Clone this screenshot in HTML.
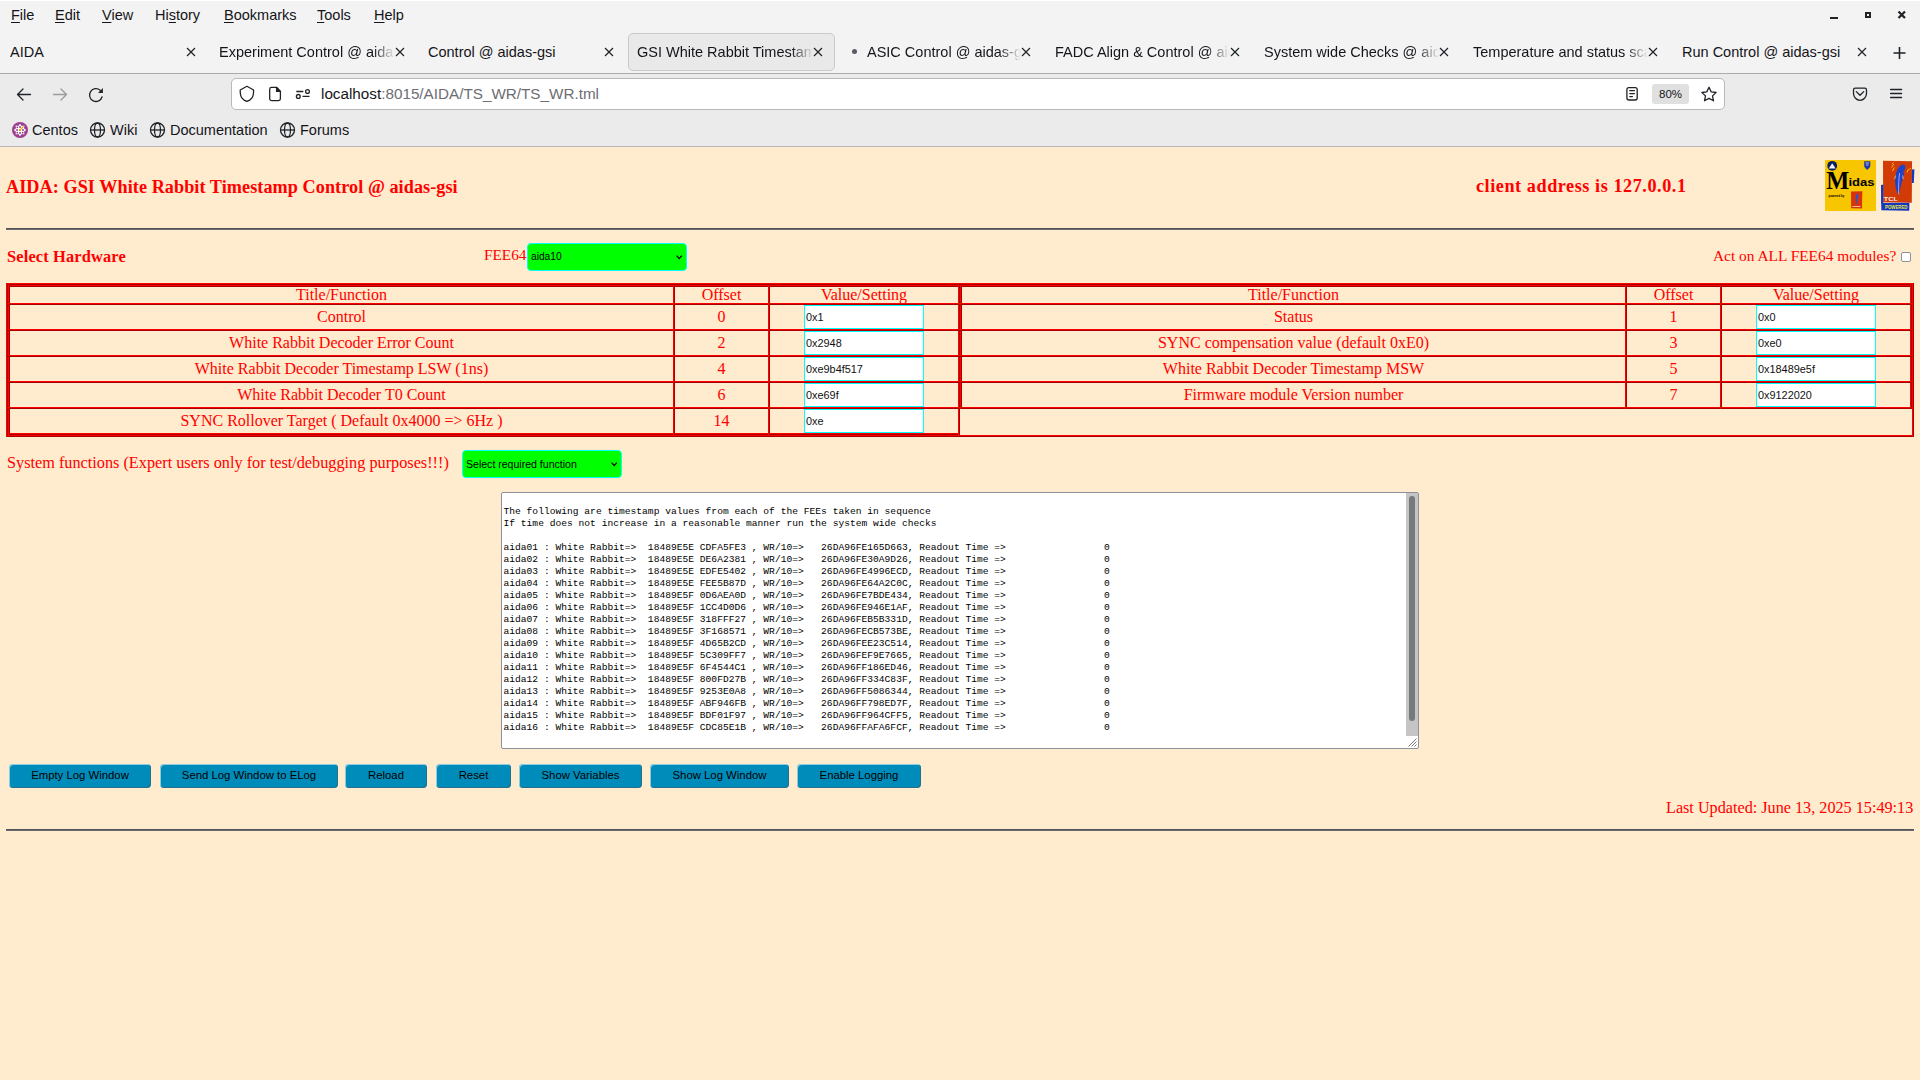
<!DOCTYPE html>
<html><head><meta charset="utf-8">
<style>
*{box-sizing:border-box}
html,body{margin:0;padding:0;width:1920px;height:1080px;overflow:hidden;background:#FFEBCD;position:relative}
.a{position:absolute;white-space:pre}
.ui{font-family:"Liberation Sans",sans-serif;font-size:14.5px;color:#15141a;line-height:17px}
#menubar{left:0;top:0;width:1920px;height:30px;background:#f3f3f3;border-top:1px solid #fff}
#tabbar{left:0;top:30px;width:1920px;height:44px;background:#f3f3f3;border-bottom:1px solid #acacac}
#navbar{left:0;top:74px;width:1920px;height:38px;background:#ebebeb}
#bmbar{left:0;top:112px;width:1920px;height:35px;background:#ebebeb;border-bottom:1px solid #b9b9b9}
.mi{top:7px}
.ul{text-decoration:underline;text-underline-offset:2px}
.tabt{top:44px;overflow:hidden;height:18px}
.fade{-webkit-mask-image:linear-gradient(to right,#000 calc(100% - 22px),transparent)}
.x{width:8px;height:8px}
svg{position:absolute;overflow:visible}
</style></head><body>
<!-- menubar -->
<div id="menubar" class="a"></div>
<div class="a ui mi" style="left:11px"><span class="ul">F</span>ile</div>
<div class="a ui mi" style="left:55px"><span class="ul">E</span>dit</div>
<div class="a ui mi" style="left:102px"><span class="ul">V</span>iew</div>
<div class="a ui mi" style="left:155px">Hi<span class="ul">s</span>tory</div>
<div class="a ui mi" style="left:224px"><span class="ul">B</span>ookmarks</div>
<div class="a ui mi" style="left:317px"><span class="ul">T</span>ools</div>
<div class="a ui mi" style="left:374px"><span class="ul">H</span>elp</div>
<svg style="left:1830px;top:10px" width="80" height="10" viewBox="0 0 80 10">
 <rect x="0" y="7" width="8" height="2" fill="#1f2327"/>
 <rect x="36" y="3" width="4" height="4" fill="none" stroke="#1f2327" stroke-width="2"/>
 <path d="M68.5 1.5 L75 8 M75 1.5 L68.5 8" stroke="#1f2327" stroke-width="2.2"/>
</svg>
<!-- tabbar -->
<div id="tabbar" class="a"></div>
<div class="a" style="left:628px;top:33px;width:207px;height:38px;background:#e9e9e9;border:1px solid #c9c9c9;border-radius:5px"></div>
<div class="a ui tabt" style="left:10px;width:170px">AIDA</div>
<div class="a ui tabt fade" style="left:219px;width:176px">Experiment Control @ aidas-gsi</div>
<div class="a ui tabt" style="left:428px;width:170px">Control @ aidas-gsi</div>
<div class="a ui tabt fade" style="left:637px;width:176px">GSI White Rabbit Timestamp Control</div>
<div class="a" style="left:852px;top:49px;width:5px;height:5px;border-radius:3px;background:#5b5b66"></div>
<div class="a ui tabt fade" style="left:867px;width:154px">ASIC Control @ aidas-gsi</div>
<div class="a ui tabt fade" style="left:1055px;width:175px">FADC Align &amp; Control @ aidas-gsi</div>
<div class="a ui tabt fade" style="left:1264px;width:175px">System wide Checks @ aidas-gsi</div>
<div class="a ui tabt fade" style="left:1473px;width:175px">Temperature and status scan @ aidas-gsi</div>
<div class="a ui tabt" style="left:1682px;width:170px">Run Control @ aidas-gsi</div>
<svg style="left:0;top:48px" width="1920" height="12" viewBox="0 0 1920 12">
 <g stroke="#1f2327" stroke-width="1.2" fill="none">
  <path d="M187 0 L195 8 M195 0 L187 8"/>
  <path d="M396 0 L404 8 M404 0 L396 8"/>
  <path d="M605 0 L613 8 M613 0 L605 8"/>
  <path d="M814 0 L822 8 M822 0 L814 8"/>
  <path d="M1022 0 L1030 8 M1030 0 L1022 8"/>
  <path d="M1231 0 L1239 8 M1239 0 L1231 8"/>
  <path d="M1440 0 L1448 8 M1448 0 L1440 8"/>
  <path d="M1649 0 L1657 8 M1657 0 L1649 8"/>
  <path d="M1858 0 L1866 8 M1866 0 L1858 8"/>
 </g>
 <path d="M1899.5 -1 V11 M1893.5 5 H1905.5" stroke="#1f2327" stroke-width="1.6"/>
</svg>
<!-- navbar -->
<div id="navbar" class="a"></div>
<svg style="left:0;top:74px" width="120" height="38" viewBox="0 0 120 38">
 <g fill="none" stroke-width="1.3" stroke-linecap="round" stroke-linejoin="round">
  <path d="M17.5 20.5 H30.5 M23 15 L17.5 20.5 L23 26" stroke="#1f2327"/>
  <path d="M53.5 20.5 H66.5 M61 15 L66.5 20.5 L61 26" stroke="#9a9a9f"/>
  <path d="M102.1 22.8 A6.4 6.4 0 1 1 100.2 16.3" stroke="#1f2327"/>
 </g>
 <path d="M102.9 14 V18.9 H98 Z" fill="#1f2327"/>
</svg>
<div class="a" style="left:231px;top:78px;width:1494px;height:32px;background:#fff;border:1px solid #b8b8b8;border-radius:5px"></div>
<svg style="left:0;top:74px" width="1920" height="38" viewBox="0 0 1920 38">
 <g fill="none" stroke="#1f2327" stroke-width="1.3" stroke-linejoin="round">
  <path d="M246.9 12.3 L253.6 16 C253.6 19 253.4 22 252 23.8 C250.8 25.4 248.6 26.8 246.9 27.4 C245.2 26.8 243 25.4 241.8 23.8 C240.4 22 240.2 19 240.2 16 Z"/>
  <path d="M271.5 13.4 H276.6 L280.4 17.4 V24.8 C280.4 25.9 279.7 26.6 278.6 26.6 H271.5 C270.4 26.6 269.7 25.9 269.7 24.8 V15.2 C269.7 14.1 270.4 13.4 271.5 13.4 Z"/>
  <path d="M276.6 13.4 L280.4 17.4 H276.6 Z" fill="#1f2327"/>
  <path d="M296.3 17.5 H303.3 M302.5 22.4 H309.5"/>
  <circle cx="307.5" cy="17.5" r="1.9"/><circle cx="298.3" cy="22.4" r="1.9"/>
  <rect x="1626.9" y="13.6" width="10.3" height="12.4" rx="2"/>
  <path d="M1629.8 16.7 H1634.4 M1629.8 19.6 H1634.4 M1629.8 22.6 H1632.4" stroke-linecap="round"/>
  <path d="M1709 13.3 L1711.2 17.9 L1716.1 18.5 L1712.5 21.9 L1713.5 26.8 L1709 24.4 L1704.5 26.8 L1705.5 21.9 L1701.9 18.5 L1706.8 17.9 Z"/>
  <path d="M1853.5 16 Q1853.5 14.2 1855.3 14.2 H1864.7 Q1866.5 14.2 1866.5 16 V19.5 C1866.5 23.2 1863.5 26.3 1860 26.3 C1856.5 26.3 1853.5 23.2 1853.5 19.5 Z"/>
  <path d="M1856.3 17.6 L1860 21.2 L1863.7 17.6" stroke-linecap="round"/>
  <path d="M1890.6 15.5 H1901.6 M1890.6 19.5 H1901.6 M1890.6 23.5 H1901.6" stroke-linecap="round"/>
 </g>
</svg>
<div class="a ui" style="left:321px;top:85px;font-size:15.25px"><span style="color:#15141a">localhost</span><span style="color:#6d6d73">:8015/AIDA/TS_WR/TS_WR.tml</span></div>
<div class="a" style="left:1652px;top:84px;width:37px;height:20px;background:#e0e0e0;border-radius:3px"></div>
<div class="a ui" style="left:1659px;top:86px;font-size:11.5px;line-height:16px">80%</div>
<!-- bookmarks bar -->
<div id="bmbar" class="a"></div>
<svg style="left:0;top:112px" width="360" height="35" viewBox="0 0 360 35">
 <circle cx="20" cy="18" r="8" fill="#9c3f8e"/>
 <polygon points="20.00,11.80 21.68,13.93 24.38,13.62 24.07,16.32 26.20,18.00 24.07,19.68 24.38,22.38 21.68,22.07 20.00,24.20 18.32,22.07 15.62,22.38 15.93,19.68 13.80,18.00 15.93,16.32 15.62,13.62 18.32,13.93" fill="#fff"/>
 <g fill="#b070b0"><rect x="19" y="14" width="2" height="2"/><rect x="19" y="20" width="2" height="2"/><rect x="16" y="17" width="2" height="2"/><rect x="22" y="17" width="2" height="2"/></g>
 <g fill="#9c3f8e"><circle cx="17.3" cy="15.3" r="0.9"/><circle cx="17.3" cy="20.7" r="0.9"/><circle cx="22.7" cy="20.7" r="0.9"/></g>
 <rect x="19" y="17" width="2" height="2" fill="#f0a000"/>
 <path d="M20.8 17.2 L23.6 14.4" stroke="#f0a000" stroke-width="1.2"/>
 <g fill="none" stroke="#1f2327" stroke-width="1.3">
  <circle cx="97.5" cy="18" r="7"/><ellipse cx="97.5" cy="18" rx="3" ry="7"/><path d="M90.5 18 H104.5"/>
  <circle cx="157.5" cy="18" r="7"/><ellipse cx="157.5" cy="18" rx="3" ry="7"/><path d="M150.5 18 H164.5"/>
  <circle cx="287.5" cy="18" r="7"/><ellipse cx="287.5" cy="18" rx="3" ry="7"/><path d="M280.5 18 H294.5"/>
 </g>
</svg>
<div class="a ui" style="left:32px;top:122px">Centos</div>
<div class="a ui" style="left:110px;top:122px">Wiki</div>
<div class="a ui" style="left:170px;top:122px">Documentation</div>
<div class="a ui" style="left:300px;top:122px">Forums</div>

<!-- CONTENT -->
<style>
.sr{font-family:"Liberation Serif",serif;color:#f00}
.b{font-weight:bold}
.hr{background:linear-gradient(#505358 50%,#6a6c70 50%);height:2px}
.hl{height:2px;background:linear-gradient(#f00 50%,#a80000 50%)}
.vl{width:2px;background:linear-gradient(90deg,#f00 50%,#a80000 50%)}
.cell{text-align:center;font-size:16px;line-height:24px;height:24px}
.inp{width:120px;height:24px;background:#fff;border:1px solid #0ff;font-family:"Liberation Sans",sans-serif;font-size:10.9px;line-height:22px;padding-left:1px;color:#111}
.btn{height:24px;top:764px;background:#008CBA;border-radius:4px;box-shadow:inset 1px 1px 0 rgba(255,255,255,.55),inset -1px -1px 0 rgba(90,70,70,.4);font-family:"Liberation Sans",sans-serif;font-size:11.35px;line-height:23px;text-align:center;color:#000}
.sel{background:#00ff00;border:1px solid #0ff;border-radius:4px;height:28px;width:160px;font-family:"Liberation Sans",sans-serif;color:#000}
</style>
<div class="a sr b" style="left:6px;top:177px;font-size:18.2px;line-height:20px;letter-spacing:0.06px">AIDA: GSI White Rabbit Timestamp Control @ aidas-gsi</div>
<div class="a sr b" style="left:1476px;top:176px;font-size:18.2px;line-height:20px;letter-spacing:0.55px">client address is 127.0.0.1</div>
<!-- logos -->
<svg style="left:1825px;top:160px" width="51" height="51" viewBox="0 0 51 51">
 <rect width="51" height="51" fill="#f7c600"/>
 <circle cx="7.2" cy="5.8" r="4.9" fill="#0d1f5c"/><path d="M3.8 8.6 L7.2 3.2 L10.6 8.6 Z" fill="#f2f2f2"/>
 <path d="M39.2 1.2 H45.3 V5.8 C45.3 8 42.2 9.8 42.2 9.8 C42.2 9.8 39.2 8 39.2 5.8 Z" fill="#1d3aa8"/>
 <path d="M40.5 3 H44 M41 5 H43.5" stroke="#dfe4ff" stroke-width="0.8"/>
 <text x="1.2" y="28.5" font-family="Liberation Serif" font-weight="bold" font-size="25.5" fill="#000" textLength="23" lengthAdjust="spacingAndGlyphs">M</text>
 <text x="23.5" y="26.2" font-family="Liberation Sans" font-weight="bold" font-size="11" fill="#000" textLength="26" lengthAdjust="spacingAndGlyphs">idas</text>
 <text x="3.6" y="37" font-family="Liberation Sans" font-weight="bold" font-size="3.2" fill="#000" textLength="15.6" lengthAdjust="spacingAndGlyphs">powered by</text>
 <path d="M26 31.5 L37.3 31.2 L37 48.4 L26.2 48.2 Z" fill="#d8340c"/>
 <path d="M32.5 33.5 C34 34 33 37 32.3 40 L31.8 45 C30.5 42 30.5 38 31 36 C31.3 34.5 31.8 33.7 32.5 33.5 Z" fill="#2a55d0"/>
 <path d="M27.5 46.5 H35.5" stroke="#f0e0d0" stroke-width="0.8"/>
</svg>
<svg style="left:1881px;top:160px" width="34" height="52" viewBox="0 0 34 52">
 <path d="M2 0.8 L31 1.2 L30.8 42.8 L2.2 42.3 Z" fill="#d23a06"/>
 <path d="M0.2 43 L28.4 42.8 L28.2 50.8 L0.4 50.2 Z" fill="#1436c0"/>
 <path d="M0 25 L2.3 24.5 L2.3 43.5 L0.1 43.5 Z" fill="#1436c0"/>
 <path d="M31 9.4 L33.4 9.2 L32.8 23 L30.9 23 Z" fill="#1436c0"/>
 <path d="M22 4.6 C25 5 24.8 8.5 23 11.5 L20.8 12.8 L23.3 12.6 C22 18 19.5 27 17.5 35.5 C15.5 31 13.8 26 14.2 19.5 C14.6 12 17.5 5.2 22 4.6 Z" fill="#1d44c8"/>
 <path d="M18.6 13 C17.6 20 17.5 28 17.6 34.5" stroke="#d8c8ff" stroke-width="0.7" fill="none"/>
 <path d="M14.6 15.5 L13.6 19 M21.6 15.5 L22.3 19" stroke="#f4f0f0" stroke-width="0.6"/>
 <path d="M11 4 L12.5 2.5 M10.5 7.5 L13 4 M11.5 11 L13.3 7.5" stroke="#f8c000" stroke-width="1" fill="none"/>
 <path d="M26 12.5 L27.5 9 M28.5 9.5 L29.5 8" stroke="#f8c000" stroke-width="1" fill="none"/>
 <text x="2.8" y="41.2" font-family="Liberation Sans" font-weight="bold" font-size="6" fill="#f4f0ee" textLength="14" lengthAdjust="spacingAndGlyphs">TCL</text>
 <text x="4" y="48.6" font-family="Liberation Sans" font-weight="bold" font-size="5" fill="#e6e83a" textLength="22.5" lengthAdjust="spacingAndGlyphs">POWERED</text>
</svg>
<div class="a hr" style="left:6px;top:228px;width:1908px"></div>
<div class="a sr b" style="left:7px;top:247px;font-size:16.4px;line-height:20px;letter-spacing:0.15px">Select Hardware</div>
<div class="a sr" style="left:484px;top:245px;font-size:15.3px;line-height:20px">FEE64</div>
<div class="a sel" style="left:527px;top:243px"></div>
<div class="a" style="left:531px;top:249px;font-family:'Liberation Sans',sans-serif;font-size:10.2px;line-height:16px;color:#000">aida10</div>
<svg style="left:676px;top:255px" width="7" height="5" viewBox="0 0 7 5"><path d="M0.6 0.6 L3.2 3.6 L5.8 0.6" fill="none" stroke="#000" stroke-width="1.3"/></svg>
<div class="a sr" style="left:1713px;top:246px;font-size:15.4px;line-height:20px">Act on ALL FEE64 modules?</div>
<div class="a" style="left:1901px;top:252px;width:10px;height:10px;background:#fff;border:1px solid #8f8f9d;border-radius:2px"></div>

<!-- table -->
<div class="a hl" style="left:6px;top:283px;width:1908px"></div>
<div class="a hl" style="left:6px;top:435px;width:1908px"></div>
<div class="a vl" style="left:6px;top:283px;height:154px"></div>
<div class="a vl" style="left:1912px;top:283px;height:154px"></div>
<div class="a hl" style="left:8px;top:285px;width:952px"></div>
<div class="a hl" style="left:8px;top:433px;width:952px"></div>
<div class="a vl" style="left:8px;top:285px;height:150px"></div>
<div class="a vl" style="left:958px;top:285px;height:150px"></div>
<div class="a hl" style="left:8px;top:303px;width:952px"></div>
<div class="a hl" style="left:8px;top:329px;width:952px"></div>
<div class="a hl" style="left:8px;top:355px;width:952px"></div>
<div class="a hl" style="left:8px;top:381px;width:952px"></div>
<div class="a hl" style="left:8px;top:407px;width:952px"></div>
<div class="a vl" style="left:673px;top:285px;height:150px"></div>
<div class="a vl" style="left:768px;top:285px;height:150px"></div>
<div class="a hl" style="left:960px;top:285px;width:952px"></div>
<div class="a hl" style="left:960px;top:407px;width:952px"></div>
<div class="a vl" style="left:960px;top:285px;height:124px"></div>
<div class="a vl" style="left:1910px;top:285px;height:124px"></div>
<div class="a hl" style="left:960px;top:303px;width:952px"></div>
<div class="a hl" style="left:960px;top:329px;width:952px"></div>
<div class="a hl" style="left:960px;top:355px;width:952px"></div>
<div class="a hl" style="left:960px;top:381px;width:952px"></div>
<div class="a vl" style="left:1625px;top:285px;height:124px"></div>
<div class="a vl" style="left:1720px;top:285px;height:124px"></div>
<div class="a sr cell" style="left:10px;top:283px;width:663px">Title/Function</div>
<div class="a sr cell" style="left:675px;top:283px;width:93px">Offset</div>
<div class="a sr cell" style="left:770px;top:283px;width:188px">Value/Setting</div>
<div class="a sr cell" style="left:962px;top:283px;width:663px">Title/Function</div>
<div class="a sr cell" style="left:1627px;top:283px;width:93px">Offset</div>
<div class="a sr cell" style="left:1722px;top:283px;width:188px">Value/Setting</div>
<div class="a sr cell" style="left:10px;top:305px;width:663px">Control</div>
<div class="a sr cell" style="left:675px;top:305px;width:93px">0</div>
<div class="a inp" style="left:804px;top:305px">0x1</div>
<div class="a sr cell" style="left:10px;top:331px;width:663px">White Rabbit Decoder Error Count</div>
<div class="a sr cell" style="left:675px;top:331px;width:93px">2</div>
<div class="a inp" style="left:804px;top:331px">0x2948</div>
<div class="a sr cell" style="left:10px;top:357px;width:663px">White Rabbit Decoder Timestamp LSW (1ns)</div>
<div class="a sr cell" style="left:675px;top:357px;width:93px">4</div>
<div class="a inp" style="left:804px;top:357px">0xe9b4f517</div>
<div class="a sr cell" style="left:10px;top:383px;width:663px">White Rabbit Decoder T0 Count</div>
<div class="a sr cell" style="left:675px;top:383px;width:93px">6</div>
<div class="a inp" style="left:804px;top:383px">0xe69f</div>
<div class="a sr cell" style="left:10px;top:409px;width:663px">SYNC Rollover Target ( Default 0x4000 =&gt; 6Hz )</div>
<div class="a sr cell" style="left:675px;top:409px;width:93px">14</div>
<div class="a inp" style="left:804px;top:409px">0xe</div>
<div class="a sr cell" style="left:962px;top:305px;width:663px">Status</div>
<div class="a sr cell" style="left:1627px;top:305px;width:93px">1</div>
<div class="a inp" style="left:1756px;top:305px">0x0</div>
<div class="a sr cell" style="left:962px;top:331px;width:663px">SYNC compensation value (default 0xE0)</div>
<div class="a sr cell" style="left:1627px;top:331px;width:93px">3</div>
<div class="a inp" style="left:1756px;top:331px">0xe0</div>
<div class="a sr cell" style="left:962px;top:357px;width:663px">White Rabbit Decoder Timestamp MSW</div>
<div class="a sr cell" style="left:1627px;top:357px;width:93px">5</div>
<div class="a inp" style="left:1756px;top:357px">0x18489e5f</div>
<div class="a sr cell" style="left:962px;top:383px;width:663px">Firmware module Version number</div>
<div class="a sr cell" style="left:1627px;top:383px;width:93px">7</div>
<div class="a inp" style="left:1756px;top:383px">0x9122020</div>

<div class="a sr" style="left:7px;top:453px;font-size:16.25px;line-height:20px">System functions (Expert users only for test/debugging purposes!!!)</div>
<div class="a sel" style="left:462px;top:450px"></div>
<div class="a" style="left:466px;top:456px;font-family:'Liberation Sans',sans-serif;font-size:10.55px;line-height:16px;color:#000">Select required function</div>
<svg style="left:611px;top:462px" width="7" height="5" viewBox="0 0 7 5"><path d="M0.6 0.6 L3.2 3.6 L5.8 0.6" fill="none" stroke="#000" stroke-width="1.3"/></svg>
<!-- textarea -->
<div class="a" style="left:501px;top:492px;width:918px;height:257px;background:#fff;border:1px solid #8f8f9d;border-radius:2px"></div>
<div class="a" style="left:503.5px;top:494px;font-family:'Liberation Mono',monospace;font-size:9.6px;letter-spacing:0.017px;line-height:12px;color:#000">
The following are timestamp values from each of the FEEs taken in sequence
If time does not increase in a reasonable manner run the system wide checks

aida01 : White Rabbit=&gt;  18489E5E CDFA5FE3 , WR/10=&gt;   26DA96FE165D663, Readout Time =&gt;                 0
aida02 : White Rabbit=&gt;  18489E5E DE6A2381 , WR/10=&gt;   26DA96FE30A9D26, Readout Time =&gt;                 0
aida03 : White Rabbit=&gt;  18489E5E EDFE5402 , WR/10=&gt;   26DA96FE4996ECD, Readout Time =&gt;                 0
aida04 : White Rabbit=&gt;  18489E5E FEE5B87D , WR/10=&gt;   26DA96FE64A2C0C, Readout Time =&gt;                 0
aida05 : White Rabbit=&gt;  18489E5F 0D6AEA0D , WR/10=&gt;   26DA96FE7BDE434, Readout Time =&gt;                 0
aida06 : White Rabbit=&gt;  18489E5F 1CC4D0D6 , WR/10=&gt;   26DA96FE946E1AF, Readout Time =&gt;                 0
aida07 : White Rabbit=&gt;  18489E5F 318FFF27 , WR/10=&gt;   26DA96FEB5B331D, Readout Time =&gt;                 0
aida08 : White Rabbit=&gt;  18489E5F 3F168571 , WR/10=&gt;   26DA96FECB573BE, Readout Time =&gt;                 0
aida09 : White Rabbit=&gt;  18489E5F 4D65B2CD , WR/10=&gt;   26DA96FEE23C514, Readout Time =&gt;                 0
aida10 : White Rabbit=&gt;  18489E5F 5C309FF7 , WR/10=&gt;   26DA96FEF9E7665, Readout Time =&gt;                 0
aida11 : White Rabbit=&gt;  18489E5F 6F4544C1 , WR/10=&gt;   26DA96FF186ED46, Readout Time =&gt;                 0
aida12 : White Rabbit=&gt;  18489E5F 800FD27B , WR/10=&gt;   26DA96FF334C83F, Readout Time =&gt;                 0
aida13 : White Rabbit=&gt;  18489E5F 9253E0A8 , WR/10=&gt;   26DA96FF5086344, Readout Time =&gt;                 0
aida14 : White Rabbit=&gt;  18489E5F ABF946FB , WR/10=&gt;   26DA96FF798ED7F, Readout Time =&gt;                 0
aida15 : White Rabbit=&gt;  18489E5F BDF01F97 , WR/10=&gt;   26DA96FF964CFF5, Readout Time =&gt;                 0
aida16 : White Rabbit=&gt;  18489E5F CDC85E1B , WR/10=&gt;   26DA96FFAFA6FCF, Readout Time =&gt;                 0</div>
<div class="a" style="left:1406px;top:493px;width:12px;height:243px;background:#c4c5c4"></div>
<div class="a" style="left:1409px;top:496px;width:6px;height:225px;background:#757a7a;border-radius:3px"></div>
<svg style="left:1406px;top:736px" width="12" height="12" viewBox="0 0 12 12"><g stroke="#6a6a6a" stroke-width="0.9"><path d="M2.5 10.5 L10.5 2.5"/><path d="M5.5 10.5 L10.5 5.5"/><path d="M8.5 10.5 L10.5 8.5"/></g></svg>
<!-- buttons -->
<div class="a btn" style="left:9px;width:142px">Empty Log Window</div>
<div class="a btn" style="left:160px;width:178px">Send Log Window to ELog</div>
<div class="a btn" style="left:345px;width:82px">Reload</div>
<div class="a btn" style="left:436px;width:75px">Reset</div>
<div class="a btn" style="left:519px;width:123px">Show Variables</div>
<div class="a btn" style="left:650px;width:139px">Show Log Window</div>
<div class="a btn" style="left:797px;width:124px">Enable Logging</div>
<div class="a sr" style="left:1666px;top:798px;font-size:16.2px;line-height:20px">Last Updated: June 13, 2025 15:49:13</div>
<div class="a hr" style="left:6px;top:829px;width:1908px"></div>

</body></html>
